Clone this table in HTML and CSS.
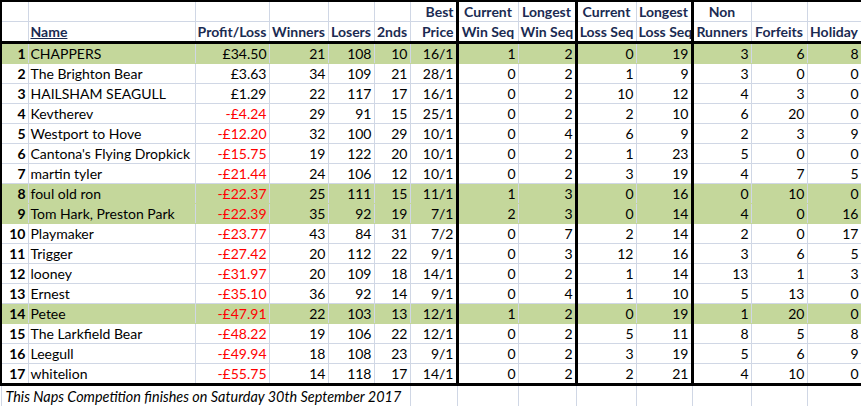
FILE: index.html
```html
<!DOCTYPE html>
<html>
<head>
<meta charset="utf-8">
<link rel="stylesheet" href="styles.css">
</head>
<body>
<table class="sheet">
<colgroup>
<col class="c-a"><col class="c-b"><col class="c-c"><col class="c-d"><col class="c-e"><col class="c-f"><col class="c-g"><col class="c-h"><col class="c-i"><col class="c-j"><col class="c-k"><col class="c-l"><col class="c-m"><col class="c-n">
</colgroup>
<thead>
<tr class="h1">
<th class="first"></th><th></th><th></th><th></th><th></th><th></th><th class="r sep">Best</th><th>Current</th><th class="sep">Longest</th><th>Current</th><th class="sep">Longest</th><th>Non</th><th></th><th class="last"></th>
</tr>
<tr class="h2">
<th class="first"></th><th class="l"><u>Name</u></th><th>Profit/Loss</th><th>Winners</th><th>Losers</th><th>2nds</th><th class="r sep">Price</th><th>Win Seq</th><th class="sep">Win Seq</th><th>Loss Seq</th><th class="sep">Loss Seq</th><th>Runners</th><th>Forfeits</th><th class="last">Holiday</th>
</tr>
</thead>
<tbody>
<tr class="g"><td class="first rk">1</td><td class="nm">CHAPPERS</td><td>£34.50</td><td>21</td><td>108</td><td>10</td><td class="sep">16/1</td><td>1</td><td class="sep">2</td><td>0</td><td class="sep">19</td><td>3</td><td>6</td><td class="last">8</td></tr>
<tr><td class="first rk">2</td><td class="nm">The Brighton Bear</td><td>£3.63</td><td>34</td><td>109</td><td>21</td><td class="sep">28/1</td><td>0</td><td class="sep">2</td><td>1</td><td class="sep">9</td><td>3</td><td>0</td><td class="last">0</td></tr>
<tr><td class="first rk">3</td><td class="nm">HAILSHAM SEAGULL</td><td>£1.29</td><td>22</td><td>117</td><td>17</td><td class="sep">16/1</td><td>0</td><td class="sep">2</td><td>10</td><td class="sep">12</td><td>4</td><td>3</td><td class="last">0</td></tr>
<tr><td class="first rk">4</td><td class="nm">Kevtherev</td><td class="neg">-£4.24</td><td>29</td><td>91</td><td>15</td><td class="sep">25/1</td><td>0</td><td class="sep">2</td><td>2</td><td class="sep">10</td><td>6</td><td>20</td><td class="last">0</td></tr>
<tr><td class="first rk">5</td><td class="nm">Westport to Hove</td><td class="neg">-£12.20</td><td>32</td><td>100</td><td>29</td><td class="sep">10/1</td><td>0</td><td class="sep">4</td><td>6</td><td class="sep">9</td><td>2</td><td>3</td><td class="last">9</td></tr>
<tr><td class="first rk">6</td><td class="nm">Cantona's Flying Dropkick</td><td class="neg">-£15.75</td><td>19</td><td>122</td><td>20</td><td class="sep">10/1</td><td>0</td><td class="sep">2</td><td>1</td><td class="sep">23</td><td>5</td><td>0</td><td class="last">0</td></tr>
<tr><td class="first rk">7</td><td class="nm">martin tyler</td><td class="neg">-£21.44</td><td>24</td><td>106</td><td>12</td><td class="sep">10/1</td><td>0</td><td class="sep">2</td><td>3</td><td class="sep">19</td><td>4</td><td>7</td><td class="last">5</td></tr>
<tr class="g"><td class="first rk">8</td><td class="nm">foul old ron</td><td class="neg">-£22.37</td><td>25</td><td>111</td><td>15</td><td class="sep">11/1</td><td>1</td><td class="sep">3</td><td>0</td><td class="sep">16</td><td>0</td><td>10</td><td class="last">0</td></tr>
<tr class="g"><td class="first rk">9</td><td class="nm">Tom Hark, Preston Park</td><td class="neg">-£22.39</td><td>35</td><td>92</td><td>19</td><td class="sep">7/1</td><td>2</td><td class="sep">3</td><td>0</td><td class="sep">14</td><td>4</td><td>0</td><td class="last">16</td></tr>
<tr><td class="first rk">10</td><td class="nm">Playmaker</td><td class="neg">-£23.77</td><td>43</td><td>84</td><td>31</td><td class="sep">7/2</td><td>0</td><td class="sep">7</td><td>2</td><td class="sep">14</td><td>2</td><td>0</td><td class="last">17</td></tr>
<tr><td class="first rk">11</td><td class="nm">Trigger</td><td class="neg">-£27.42</td><td>20</td><td>112</td><td>22</td><td class="sep">9/1</td><td>0</td><td class="sep">3</td><td>12</td><td class="sep">16</td><td>3</td><td>6</td><td class="last">5</td></tr>
<tr><td class="first rk">12</td><td class="nm">looney</td><td class="neg">-£31.97</td><td>20</td><td>109</td><td>18</td><td class="sep">14/1</td><td>0</td><td class="sep">2</td><td>1</td><td class="sep">14</td><td>13</td><td>1</td><td class="last">3</td></tr>
<tr><td class="first rk">13</td><td class="nm">Ernest</td><td class="neg">-£35.10</td><td>36</td><td>92</td><td>14</td><td class="sep">9/1</td><td>0</td><td class="sep">4</td><td>1</td><td class="sep">10</td><td>5</td><td>13</td><td class="last">0</td></tr>
<tr class="g"><td class="first rk">14</td><td class="nm">Petee</td><td class="neg">-£47.91</td><td>22</td><td>103</td><td>13</td><td class="sep">12/1</td><td>1</td><td class="sep">2</td><td>0</td><td class="sep">19</td><td>1</td><td>20</td><td class="last">0</td></tr>
<tr><td class="first rk">15</td><td class="nm">The Larkfield Bear</td><td class="neg">-£48.22</td><td>19</td><td>106</td><td>22</td><td class="sep">12/1</td><td>0</td><td class="sep">2</td><td>5</td><td class="sep">11</td><td>8</td><td>5</td><td class="last">8</td></tr>
<tr><td class="first rk">16</td><td class="nm">Leegull</td><td class="neg">-£49.94</td><td>18</td><td>108</td><td>23</td><td class="sep">9/1</td><td>0</td><td class="sep">2</td><td>3</td><td class="sep">19</td><td>5</td><td>6</td><td class="last">9</td></tr>
<tr class="end"><td class="first rk">17</td><td class="nm">whitelion</td><td class="neg">-£55.75</td><td>14</td><td>118</td><td>17</td><td class="sep">14/1</td><td>0</td><td class="sep">2</td><td>2</td><td class="sep">21</td><td>4</td><td>10</td><td class="last">0</td></tr>
<tr class="foot"><td class="note" colspan="6">This Naps Competition finishes on Saturday 30th September 2017</td><td></td><td></td><td></td><td></td><td></td><td></td><td></td><td></td></tr>
</tbody>
</table>
</body>
</html>
```
FILE: styles.css
```css
html, body {
  margin: 0;
  padding: 0;
  background: #ffffff;
}
.sheet {
  border-collapse: collapse;
  table-layout: fixed;
  width: 861px;
  font-family: Lato, "Open Sans", sans-serif;
  font-size: 14px;
  color: #000;
}
.c-a { width: 27px; }
.c-b { width: 167px; }
.c-c { width: 74px; }
.c-d { width: 59px; }
.c-e { width: 46px; }
.c-f { width: 36px; }
.c-g { width: 47px; }
.c-h { width: 61px; }
.c-i { width: 58px; }
.c-j { width: 60px; }
.c-k { width: 56px; }
.c-l { width: 59px; }
.c-m { width: 56px; }
.c-n { width: 55px; }
.sheet th, .sheet td {
  border: 1px solid #d0d7e5;
  height: 19px;
  padding: 0 2px;
  line-height: 19px;
  white-space: nowrap;
  overflow: hidden;
}
.sheet th {
  font-weight: bold;
  color: #1b2b52;
  text-align: center;
}
.sheet th.l { text-align: left; }
.sheet th.r { text-align: right; }
.sheet td { text-align: right; }
.sheet td.nm { text-align: left; }
.sheet td.rk { font-weight: bold; }
.sheet td.neg { color: #ff0000; }
.h1 th { border-top: 2px solid #000; }
.h2 th { border-bottom: 3px solid #000; }
.sheet .first { border-left: 2px solid #000; }
.sheet .last { border-right: 3px solid #000; }
.sheet .sep { border-right: 3px solid #000; }
.g td { background: #c4d79b; border-top-color: #c4d79b; border-bottom-color: #c4d79b; }
.g td + td { border-left-color: #c4d79b; }
.end td { border-bottom: 3px solid #000; }
.foot td { height: 20px; }
.foot td.note {
  text-align: left;
  font-style: italic;
  font-size: 14.4px;
  padding-left: 4px;
  overflow: visible;
}
```
